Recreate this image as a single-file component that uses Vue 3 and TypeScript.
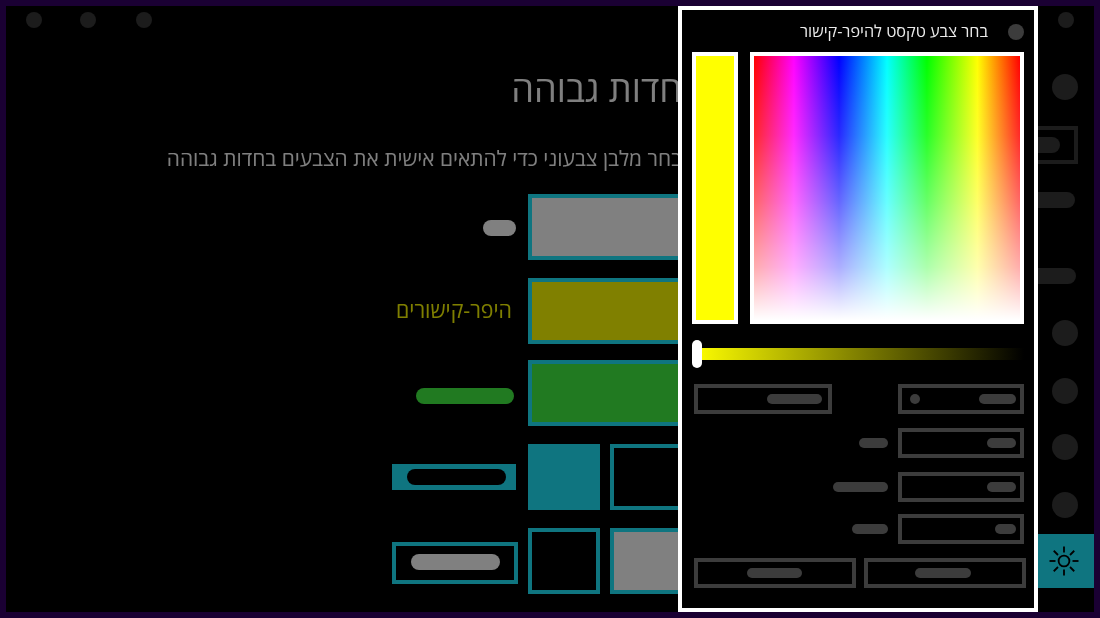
<script setup lang="ts">
const topDots: string[] = ['a', 'b', 'c']
const title = 'חדות גבוהה'
const subtitle = 'בחר מלבן צבעוני כדי להתאים אישית את הצבעים בחדות גבוהה'
const modalTitle = 'בחר צבע טקסט להיפר-קישור'
const sunRays: number[] = [0, 45, 90, 135, 180, 225, 270, 315]
</script>

<template>
  <div class="page">
    <main class="main">
      <div class="dots">
        <span v-for="d in topDots" :key="d" class="dot" :class="`dot-${d}`"></span>
      </div>
      <h1 class="title" dir="rtl">{{ title }}</h1>
      <p class="subtitle" dir="rtl">{{ subtitle }}</p>
      <div class="rows">
        <div class="row">
          <div class="cell"><span class="pill gray p1"></span></div>
          <div class="swatch wide fill-gray"></div>
        </div>
        <div class="row">
          <div class="cell"><span class="link-label" dir="rtl">היפר-קישורים</span></div>
          <div class="swatch wide fill-olive"></div>
        </div>
        <div class="row row-tight">
          <div class="cell"><span class="pill green p3"></span></div>
          <div class="swatch wide fill-green"></div>
        </div>
        <div class="row">
          <div class="cell">
            <div class="selected"><span class="pill black p4"></span></div>
          </div>
          <div class="pair">
            <div class="swatch small fill-teal"></div>
            <div class="swatch rest"></div>
          </div>
        </div>
        <div class="row">
          <div class="cell">
            <div class="outlined"><span class="pill gray p5"></span></div>
          </div>
          <div class="pair">
            <div class="swatch small"></div>
            <div class="swatch rest fill-gray"></div>
          </div>
        </div>
      </div>
    </main>

    <aside class="rail">
      <span class="dot r-top"></span>
      <span class="circle r-c1"></span>
      <div class="r-box"><span class="pill r-fill r-box-pill"></span></div>
      <span class="pill r-fill r-p1"></span>
      <span class="pill r-fill r-p2"></span>
      <span class="circle r-c2"></span>
      <span class="circle r-c3"></span>
      <span class="circle r-c4"></span>
      <span class="circle r-c5"></span>
      <div class="r-active">
        <svg width="30" height="30" viewBox="0 0 30 30" fill="none" stroke="#000" stroke-width="1.8">
          <circle cx="15" cy="15" r="5.4" />
          <line
            v-for="a in sunRays"
            :key="a"
            x1="15"
            y1="0.5"
            x2="15"
            y2="6.5"
            :transform="`rotate(${a} 15 15)`"
          />
        </svg>
      </div>
    </aside>

    <section class="modal">
      <header class="modal-head">
        <span class="modal-title" dir="rtl">{{ modalTitle }}</span>
        <span class="close"></span>
      </header>
      <div class="picker">
        <div class="preview"></div>
        <div class="spectrum"></div>
      </div>
      <div class="slider"><span class="thumb"></span></div>
      <div class="form">
        <div class="form-row">
          <div class="field field-left"><span class="pill ctl w55"></span></div>
          <div class="field">
            <span class="mini-dot"></span>
            <span class="pill ctl w37"></span>
          </div>
        </div>
        <div class="form-row end row-a">
          <span class="pill ctl w29"></span>
          <div class="field"><span class="pill ctl w29"></span></div>
        </div>
        <div class="form-row end row-a">
          <span class="pill ctl w55"></span>
          <div class="field"><span class="pill ctl w29"></span></div>
        </div>
        <div class="form-row end row-b">
          <span class="pill ctl w36"></span>
          <div class="field"><span class="pill ctl w21"></span></div>
        </div>
        <div class="buttons">
          <div class="btn"><span class="pill ctl w55 shift-a"></span></div>
          <div class="btn"><span class="pill ctl w56 shift-b"></span></div>
        </div>
      </div>
    </section>
  </div>
</template>

<style>
html,
body {
  margin: 0;
  background: #000;
}
</style>

<style scoped>
.page {
  position: relative;
  width: 1100px;
  height: 618px;
  box-sizing: border-box;
  border: 6px solid #1a0033;
  background: #000;
  display: flex;
  overflow: hidden;
  font-family: "Open Sans", "DejaVu Sans", sans-serif;
}
.main {
  width: 1012px;
  flex: none;
}
.dots {
  display: flex;
  padding: 6px 0 0 20px;
  height: 16px;
}
.dot {
  display: block;
  width: 16px;
  height: 16px;
  border-radius: 50%;
  background: #1c1c1c;
}
.dot-b {
  margin-left: 38px;
}
.dot-c {
  margin-left: 40px;
}
.title {
  margin: 35px 0 0;
  width: 676px;
  height: 50px;
  line-height: 50px;
  font-size: 36.2px;
  font-weight: 400;
  color: #fff;
  opacity: 0.5;
  will-change: transform;
  white-space: nowrap;
  text-align: right;
}
.subtitle {
  margin: 30px 0 0;
  width: 676px;
  height: 30px;
  line-height: 30px;
  font-size: 20.9px;
  font-weight: 400;
  color: #fff;
  opacity: 0.5;
  will-change: transform;
  white-space: nowrap;
  text-align: right;
}
.rows {
  margin-top: 21px;
  display: flex;
  flex-direction: column;
  gap: 18px;
}
.row {
  display: flex;
  gap: 10px;
  height: 66px;
}
.row-tight {
  margin-top: -2px;
}
.cell {
  width: 512px;
  flex: none;
  display: flex;
  align-items: center;
  justify-content: flex-end;
}
.pill {
  display: block;
  height: 16px;
  border-radius: 8px;
}
.gray {
  background: #808080;
}
.green {
  background: #217a21;
}
.black {
  background: #000;
}
.p1 {
  width: 33px;
  margin: 2px 2px 0 0;
}
.p3 {
  width: 98px;
  margin: 6px 4px 0 0;
}
.p4 {
  width: 99px;
}
.p5 {
  width: 89px;
}
.link-label {
  font-size: 21.3px;
  font-weight: 400;
  line-height: 30px;
  color: #ff0;
  opacity: 0.5;
  will-change: transform;
  margin: -2px 6px 0 0;
}
.selected {
  width: 124px;
  height: 26px;
  margin: 0 2px 0 0;
  background: #0f7580;
  display: flex;
  align-items: center;
  padding-left: 15px;
  box-sizing: border-box;
}
.outlined {
  width: 126px;
  height: 42px;
  margin-top: 4px;
  box-sizing: border-box;
  border: 4px solid #0f7580;
  display: flex;
  align-items: center;
  padding: 0 0 2px 15px;
}
.swatch {
  box-sizing: border-box;
  border: 4px solid #0f7580;
  height: 66px;
}
.wide {
  width: 480px;
}
.pair {
  display: flex;
  gap: 10px;
}
.small {
  width: 72px;
}
.rest {
  width: 398px;
}
.fill-gray {
  background: #808080;
}
.fill-olive {
  background: #808000;
}
.fill-green {
  background: #217a21;
}
.fill-teal {
  background: #0f7580;
}

.rail {
  width: 76px;
  flex: none;
  display: flex;
  flex-direction: column;
  align-items: flex-end;
}
.r-fill {
  background: #1c1c1c;
}
.circle {
  display: block;
  width: 26px;
  height: 26px;
  border-radius: 50%;
  background: #1c1c1c;
  margin-right: 16px;
}
.r-top {
  margin: 6px 20px 0 0;
}
.r-c1 {
  margin-top: 46px;
}
.r-box {
  margin: 26px 16px 0 0;
  width: 60px;
  height: 38px;
  box-sizing: border-box;
  border: 4px solid #1c1c1c;
  display: flex;
  align-items: center;
  justify-content: flex-end;
}
.r-box-pill {
  width: 40px;
  margin-right: 14px;
}
.r-p1 {
  width: 50px;
  margin: 28px 19px 0 0;
}
.r-p2 {
  width: 50px;
  margin: 60px 18px 0 0;
}
.r-c2 {
  margin-top: 36px;
}
.r-c3 {
  margin-top: 32px;
}
.r-c4 {
  margin-top: 30px;
}
.r-c5 {
  margin-top: 32px;
}
.r-active {
  margin-top: 16px;
  width: 56px;
  height: 54px;
  background: #0f7580;
  display: flex;
  align-items: center;
  justify-content: center;
  padding: 0 5px 1px 0;
  box-sizing: border-box;
}

.modal {
  position: absolute;
  left: 672px;
  top: 0;
  width: 360px;
  height: 606px;
  box-sizing: border-box;
  border: 4px solid #fff;
  background: #000;
  padding: 0 10px;
}
.modal-head {
  height: 42px;
  display: flex;
  align-items: center;
  justify-content: flex-end;
}
.modal-title {
  font-size: 16.2px;
  line-height: 22px;
  color: #fff;
  opacity: 0.92;
  will-change: transform;
  white-space: nowrap;
}
.close {
  width: 16px;
  height: 16px;
  border-radius: 50%;
  background: #3c3c3c;
  margin-left: 20px;
  margin-top: 2px;
}
.picker {
  display: flex;
  gap: 12px;
}
.preview {
  width: 46px;
  height: 272px;
  box-sizing: border-box;
  border: 4px solid #fff;
  background: #ff0;
}
.spectrum {
  width: 274px;
  height: 272px;
  box-sizing: border-box;
  border: 4px solid #fff;
  background:
    linear-gradient(
      to bottom,
      rgba(255, 255, 255, 0) 0%,
      rgba(255, 255, 255, 0.16) 30%,
      rgba(255, 255, 255, 0.4) 55%,
      rgba(255, 255, 255, 0.68) 80%,
      rgba(255, 255, 255, 0.87) 92%,
      #fff 100%
    ),
    linear-gradient(
      to right,
      #f00 0%,
      #f0f 15%,
      #00f 32%,
      #0ff 50%,
      #0f0 65%,
      #ff0 84%,
      #f00 100%
    );
}
.slider {
  position: relative;
  margin-top: 24px;
  height: 12px;
  width: 332px;
  background: linear-gradient(to right, #ff0 0%, #000 100%);
}
.thumb {
  position: absolute;
  left: 0;
  top: -8px;
  width: 10px;
  height: 28px;
  border-radius: 5px;
  background: #fff;
}
.form {
  margin-top: 24px;
  width: 332px;
  display: flex;
  flex-direction: column;
}
.form-row {
  display: flex;
  align-items: center;
  justify-content: space-between;
}
.form-row.end {
  justify-content: flex-end;
  gap: 10px;
}
.row-a {
  margin-top: 14px;
}
.row-b {
  margin-top: 12px;
}
.field {
  box-sizing: border-box;
  width: 126px;
  height: 30px;
  border: 4px solid #3c3c3c;
  display: flex;
  align-items: center;
  justify-content: space-between;
  padding: 0 4px 0 8px;
}
.field-left {
  width: 138px;
  margin-left: 2px;
  justify-content: flex-end;
  padding: 0 6px 0 0;
}
.form-row.end .field {
  justify-content: flex-end;
}
.mini-dot {
  width: 10px;
  height: 10px;
  border-radius: 50%;
  background: #3c3c3c;
}
.ctl {
  height: 10px;
  border-radius: 5px;
  background: #3c3c3c;
}
.w21 {
  width: 21px;
}
.w29 {
  width: 29px;
}
.w36 {
  width: 36px;
}
.w37 {
  width: 37px;
}
.w55 {
  width: 55px;
}
.w56 {
  width: 56px;
}
.shift-a {
  margin-right: 2px;
}
.shift-b {
  margin-right: 4px;
}
.buttons {
  margin: 14px -2px 0 2px;
  display: flex;
  gap: 8px;
}
.btn {
  box-sizing: border-box;
  width: 162px;
  height: 30px;
  border: 4px solid #3c3c3c;
  display: flex;
  align-items: center;
  justify-content: center;
}
</style>
